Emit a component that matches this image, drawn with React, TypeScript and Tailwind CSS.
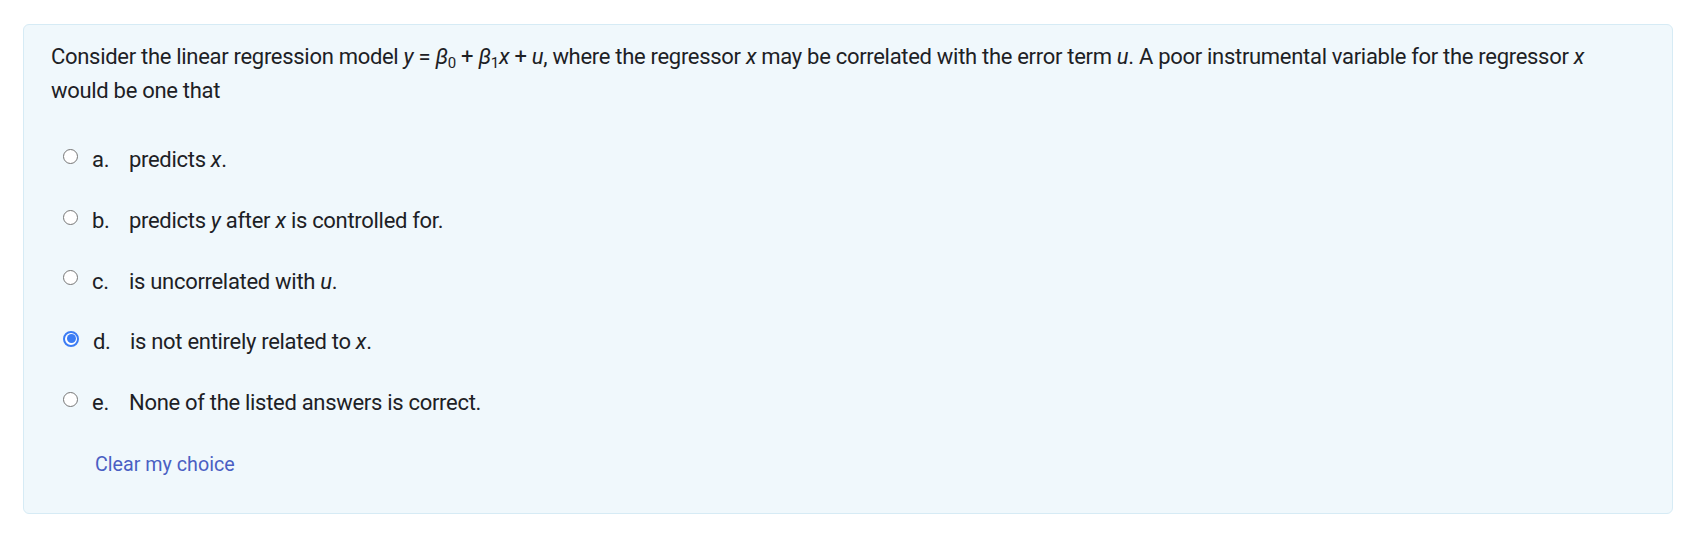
import { useState } from 'react';

type Option = { key: string; label: React.ReactNode };

const M = ({ children }: { children: React.ReactNode }) => <i className="italic">{children}</i>;

const OPTIONS: Option[] = [
  { key: 'a', label: <>predicts <M>x</M>.</> },
  { key: 'b', label: <>predicts <M>y</M> after <M>x</M> is controlled for.</> },
  { key: 'c', label: <>is uncorrelated with <M>u</M>.</> },
  { key: 'd', label: <>is not entirely related to <M>x</M>.</> },
  { key: 'e', label: <>None of the listed answers is correct.</> },
];

function Radio({ checked }: { checked: boolean }) {
  if (checked) {
    return (
      <span className="flex h-[16px] w-[16px] shrink-0 items-center justify-center rounded-full border-[2px] border-[#3b7cf4] bg-white">
        <span className="h-[9px] w-[9px] rounded-full bg-[#3b7cf4]" />
      </span>
    );
  }
  return <span className="block h-[15px] w-[15px] shrink-0 rounded-full border border-[#767676] bg-white" />;
}

export default function App() {
  const [choice, setChoice] = useState<string | null>('d');

  return (
    <div className="min-h-screen bg-white pl-[23px] pr-[13px] pt-[24px] font-['Roboto',sans-serif] text-[#1d2125]">
      <div className="h-[490px] rounded-[6px] border border-[#d6ebf5] bg-[#f0f8fc] pl-[27px] pr-[40px] pt-[15px]">
        <p className="text-[22px] leading-[33.75px] tracking-[-0.3px]">
          Consider the linear regression model <M>y</M> = <M>β</M>
          <sub className="text-[15px]">0</sub> + <M>β</M>
          <sub className="text-[15px]">1</sub>
          <M>x</M> + <M>u</M>, where the regressor <M>x</M> may be correlated with the error term <M>u</M>. A poor
          instrumental variable for the regressor <M>x</M> would be one that
        </p>

        <div className="mt-[22px]">
          {OPTIONS.map((o) => (
            <label
              key={o.key}
              onClick={() => setChoice(o.key)}
              className="flex h-[60.75px] cursor-pointer items-center pl-[12px] text-[22px] leading-[33.75px] tracking-[-0.3px]"
            >
              <span className="mb-[7px]">
                <Radio checked={choice === o.key} />
              </span>
              <span className="ml-[14px] w-[37px]">{o.key}.</span>
              <span>{o.label}</span>
            </label>
          ))}
        </div>

        <button
          onClick={() => setChoice(null)}
          className="ml-[44px] mt-[17px] text-[19.7px] leading-[29.5px] text-[#4a5fc3]"
        >
          Clear my choice
        </button>
      </div>
    </div>
  );
}
